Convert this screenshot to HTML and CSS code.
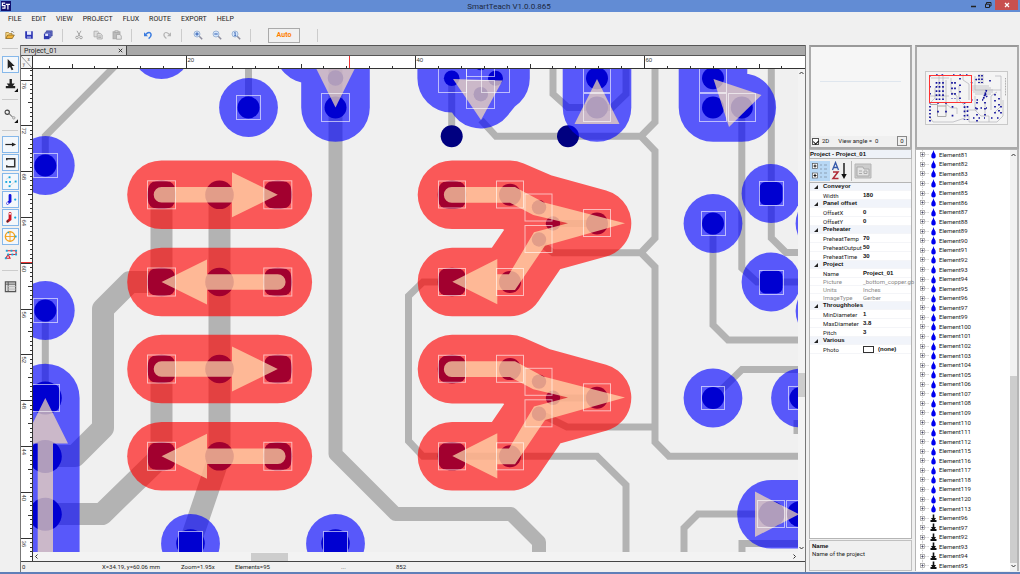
FILE: index.html
```html
<!DOCTYPE html>
<html lang="en">
<head>
<meta charset="utf-8">
<title>SmartTeach V1.0.0.865</title>
<link rel="stylesheet" href="styles.css">
</head>
<body>
<div class="app">
  <header class="titlebar">
    <svg class="logo" viewBox="0 0 10 10" aria-hidden="true"><rect width="10" height="10" fill="#101070"/><path d="M4.2 2.2H1.4V4.6H4V7.2H1.2M4.8 3.4H9M6.9 3.4V8.6" fill="none" stroke="#fff" stroke-width="1.2"/></svg>
    <h1 class="title">SmartTeach V1.0.0.865</h1>
    <div class="winbtns">
      <button class="win" aria-label="Minimize"><svg viewBox="0 0 10 10"><path d="M2 6.5H7" stroke="#222" stroke-width="1.5"/></svg></button>
      <button class="win" aria-label="Restore"><svg viewBox="0 0 10 10"><path d="M3.5 4V2.5H8V6H7M2.5 4.2H6.5V7.5H2.500Z" fill="none" stroke="#222"/></svg></button>
      <button class="win close" aria-label="Close"><svg viewBox="0 0 10 10"><path d="M3 3L7 7M7 3L3 7" stroke="#fff" stroke-width="1.2"/></svg></button>
    </div>
  </header>
  <nav class="menu">
    <button>FILE</button><button>EDIT</button><button>VIEW</button><button>PROJECT</button><button>FLUX</button><button>ROUTE</button><button>EXPORT</button><button>HELP</button>
  </nav>
  <div class="toolbar">
    <button class="tb" aria-label="Open"><svg viewBox="0 0 10 10"><path d="M.8 8.500V2.500H3.500L4.300 3.500H7V5" fill="#f7d98a" stroke="#a87a20" stroke-width=".7"/><path d="M.8 8.500L2.700 5H9.300L7.300 8.500Z" fill="#f2b43c" stroke="#7a5a18" stroke-width=".7"/><path d="M6 1.800Q8 .8 8.800 2.700" fill="none" stroke="#555" stroke-width=".7"/></svg></button>
    <button class="tb" aria-label="Save"><svg viewBox="0 0 10 10"><path d="M1.200 1.200H8.800V8.800H2L1.200 8Z" fill="#2c35b4"/><rect x="3" y="1.200" width="4.200" height="3.600" fill="#e8ecff"/><rect x="3" y="6.200" width="4" height="2.600" fill="#8a92dc"/></svg></button>
    <button class="tb" aria-label="Save all"><svg viewBox="0 0 10 10"><path d="M3.500 .8H9.200V6H3.500Z" fill="#6b74cc" stroke="#2c3590" stroke-width=".6"/><path d="M2.200 2.200H7.800V7.500H2.200Z" fill="#7d86d8" stroke="#2c3590" stroke-width=".6"/><path d="M.9 3.600H6.500V9.200H.9Z" fill="#2f39b0"/><rect x="2.200" y="3.700" width="3" height="2.300" fill="#dfe4ff"/></svg></button>
    <span class="sep"></span>
    <button class="tb" aria-label="Cut"><svg viewBox="0 0 10 10"><g fill="none" stroke="#a6a6a6"><path d="M3 .8L6 6.300M7 .8L4 6.300"/><circle cx="3" cy="7.500" r="1.300"/><circle cx="7" cy="7.500" r="1.300"/></g></svg></button>
    <button class="tb" aria-label="Copy"><svg viewBox="0 0 10 10"><g fill="#ddd" stroke="#aaa" stroke-width=".8"><path d="M1 1.200H4.500L6 2.600V6.800H1Z"/><path d="M4.200 3.500H7.500L9.200 5V9H4.200Z"/><path d="M5.200 6H8M5.200 7.500H8"/></g></svg></button>
    <button class="tb" aria-label="Paste"><svg viewBox="0 0 10 10"><g stroke="#a5a5a5" stroke-width=".8"><rect x="1" y="1.800" width="7" height="7" fill="#bbb"/><rect x="3" y=".8" width="3" height="1.800" fill="#ddd"/><path d="M4.500 4.500H8L9.300 6V9.200H4.500Z" fill="#e6e6e6"/></g></svg></button>
    <span class="sep"></span>
    <button class="tb" aria-label="Undo"><svg viewBox="0 0 10 10"><path d="M2.600 4.400Q6.500 .8 8 4Q8.600 6.500 5.600 8.600" fill="none" stroke="#3a7be0" stroke-width="1.400"/><path d="M1 2.200V6.200H5Z" fill="#3a7be0"/></svg></button>
    <button class="tb" aria-label="Redo"><svg viewBox="0 0 10 10"><path d="M7.400 4.400Q3.500 .8 2 4Q1.400 6.500 4.400 8.600" fill="none" stroke="#b4b4b4" stroke-width="1.200"/><path d="M9 2.200V6.200H5Z" fill="#b4b4b4"/></svg></button>
    <span class="sep"></span>
    <button class="tb" aria-label="Zoom in"><svg viewBox="0 0 10 10"><path d="M6 6L9.200 9.200" stroke="#8e8e9e" stroke-width="1.500"/><circle cx="4" cy="4" r="3" fill="#d5e6fb" stroke="#8fa9cf" stroke-width=".8"/><path d="M2.300 4H5.700M4 2.300V5.700" stroke="#2c5bb0"/></svg></button>
    <button class="tb" aria-label="Zoom out"><svg viewBox="0 0 10 10"><path d="M6 6L9.200 9.200" stroke="#8e8e9e" stroke-width="1.500"/><circle cx="4" cy="4" r="3" fill="#d5e6fb" stroke="#8fa9cf" stroke-width=".8"/><path d="M2.300 4H5.700" stroke="#2c5bb0"/></svg></button>
    <button class="tb" aria-label="Zoom 100%"><svg viewBox="0 0 10 10"><path d="M6 6L9.200 9.200" stroke="#8e8e9e" stroke-width="1.500"/><circle cx="4" cy="4" r="3" fill="#d5e6fb" stroke="#8fa9cf" stroke-width=".8"/><path d="M3.200 3L4.200 2.300V5.700M3.200 5.700H5.200" stroke="#2c5bb0" fill="none" stroke-width=".8"/></svg></button>
    <span class="sep"></span>
    <button class="auto">Auto</button>
    <span class="sep far"></span>
  </div>
  <main class="body">
    <aside class="tools">
      <span class="grip"></span>
      <button class="tool on" aria-label="Select"><svg viewBox="0 0 16 16"><path d="M5 2V12.500L7.500 10.300L9.200 14L11 13.200L9.300 9.600H12.500Z" fill="#222"/></svg></button>
      <button class="tool" aria-label="Nozzle"><svg viewBox="0 0 16 16"><path d="M7 2H9.500V7H12.500L10.500 9.500H13V12H3V9.500H6L4 7H7Z" fill="#222"/><path d="M16 12V16H12Z" fill="#111"/></svg></button>
      <span class="grip"></span>
      <button class="tool" aria-label="Route"><svg viewBox="0 0 16 16"><g fill="none" stroke="#444"><circle cx="4.500" cy="4.500" r="2.300" stroke-width="1.200"/><path d="M6.500 6L10 9.500"/><circle cx="11.500" cy="10.500" r="1.300" stroke="#999"/></g><path d="M16 12V16H12Z" fill="#111"/></svg></button>
      <span class="grip"></span>
      <div class="toolset">
        <button class="tool on" aria-label="Arrow"><svg viewBox="0 0 16 16"><path d="M2.500 8H10" stroke="#222" stroke-width="1.300"/><path d="M9.500 5.800L14 8L9.500 10.200Z" fill="#222"/></svg></button>
        <button class="tool on" aria-label="Bracket"><svg viewBox="0 0 16 16"><path d="M4 5.500V4H12.500V12.500H4V11" fill="none" stroke="#333" stroke-width="1.600"/></svg></button>
        <button class="tool on" aria-label="Points"><svg viewBox="0 0 16 16"><g stroke="#bbb" stroke-width=".5" fill="none"><path d="M3 6L7 3M7 13L13 8"/></g><g fill="#18a8dc"><rect x="6" y="2.500" width="2" height="2"/><rect x="2.500" y="7.500" width="2" height="2"/><rect x="6.500" y="7.500" width="2" height="2"/><rect x="12.500" y="7" width="2" height="2"/><rect x="6" y="12" width="2" height="2"/></g></svg></button>
        <button class="tool on" aria-label="Blue joint"><svg viewBox="0 0 16 16"><path d="M7.500 3.500V10L5 12" fill="none" stroke="#1414dc" stroke-width="3" stroke-linecap="round"/><circle cx="5" cy="12" r="1" fill="#fff"/><circle cx="13" cy="8" r="1.200" fill="#18a8dc"/></svg></button>
        <button class="tool on" aria-label="Red joint"><svg viewBox="0 0 16 16"><path d="M7.500 3.500V10L5 12" fill="none" stroke="#d01420" stroke-width="3" stroke-linecap="round"/><circle cx="7.500" cy="4" r="1" fill="#fff"/><circle cx="5" cy="12" r="1" fill="#333"/><circle cx="13" cy="8" r="1.200" fill="#18a8dc"/></svg></button>
        <button class="tool on" aria-label="Target"><svg viewBox="0 0 16 16"><circle cx="7.500" cy="8" r="5" fill="none" stroke="#f5a21c" stroke-width="1.500"/><path d="M7.500 3V13M2.500 8H12.500" stroke="#f5a21c"/><g fill="#18a8dc"><rect x="5" y="3" width="1.500" height="1.500"/><rect x="12.500" y="7" width="2" height="2"/></g></svg></button>
        <button class="tool" aria-label="Path"><svg viewBox="0 0 16 16"><path d="M4 4H14V8H5.500L7.500 12H3L5.500 8" fill="none" stroke="#e02030" stroke-width="1.200"/><g fill="#18a8dc"><rect x="3" y="3" width="2" height="2"/><rect x="8" y="3" width="2" height="2"/><rect x="13" y="3" width="2" height="2"/><rect x="9" y="7" width="2" height="2"/><rect x="4.500" y="7" width="2" height="2"/><rect x="13" y="7" width="2" height="2"/><rect x="2" y="11" width="2" height="2"/></g></svg></button>
      </div>
      <span class="grip"></span>
      <button class="tool" aria-label="Sheet"><svg viewBox="0 0 16 16"><path d="M2.500 3H13.500V13.500H2.500Z" fill="#ddd" stroke="#555" stroke-width="1.200"/><path d="M2.500 5.500H13.500M5.500 3V13.500" stroke="#555" fill="none"/><path d="M5.500 8H13.500M5.500 10.800H13.500" stroke="#bbb" fill="none"/></svg></button>
    </aside>
    <section class="work">
      <div class="tabs"><div class="tab"><span>Project_01</span><button class="tabx" aria-label="Close tab"><svg viewBox="0 0 8 8"><path d="M2 2L6 6M6 2L2 6" stroke="#222"/></svg></button></div></div>
      <div class="stage">
        <svg class="corner" viewBox="0 0 12 13"><path d="M0 0L12 13" stroke="#777" stroke-width=".8"/><text x="7" y="5" class="rt">x</text><text x="2" y="11" class="rt">y</text></svg>
        <svg class="hruler" id="hruler" aria-hidden="true"></svg>
        <svg class="vruler" id="vruler" aria-hidden="true"></svg>
        <svg class="board" viewBox="33 69 765 483" preserveAspectRatio="xMinYMin slice" role="img" aria-label="Circuit board">
          <defs>
            <g id="round"><circle r="11"/></g>
            <path id="vee" d="M452 194.800H510L539 207.500L597 223.500L539 239.500L510 282H452"/>
            <g id="veepads"><rect x="438.500" y="181.500" width="27" height="27" rx="8"/><circle cx="452" cy="194.800" r="14.300"/><circle cx="510" cy="194.800" r="11"/><circle cx="539" cy="207.300" r="7.200"/><circle cx="553" cy="223.500" r="7.200"/><circle cx="539" cy="239.500" r="7.200"/><circle cx="597" cy="223.500" r="11"/><circle cx="510" cy="282" r="11"/><rect x="438.500" y="268.500" width="27" height="27" rx="8"/><circle cx="452" cy="282" r="14.300"/></g>
            <path id="veearrow" d="M451.700 187H515L543.300 202.300L625 223.300L545 245.700L515 290H497.300V304.300L452.300 281.700L497.300 259V274.300H509L534 232.300L568 223.300L533.300 215L510 202.700H451.700A7.800 7.800 0 0 1 451.700 187Z"/>
            <g id="veebox"><rect x="438.500" y="181" width="27" height="27"/><rect x="496.500" y="181" width="27" height="27"/><rect x="525" y="194" width="27" height="27"/><rect x="525" y="225.500" width="27" height="27"/><rect x="583.500" y="209.500" width="27" height="27"/><rect x="438.500" y="268.500" width="27" height="27"/><rect x="496.500" y="268.500" width="27" height="27"/></g>
            <g id="rowpads"><rect x="148" y="-13.500" width="27" height="27" rx="8"/><circle cx="161.500" r="14.300"/><circle cx="219.500" r="14.300"/><rect x="264.300" y="-13.500" width="27" height="27" rx="8"/><circle cx="277.800" r="14.300"/></g>
            <g id="rowbox"><rect x="147.500" y="-14" width="28" height="28"/><rect x="263.800" y="-14" width="28" height="28"/></g>
            <path id="right" d="M161.500 -7.800H232V-22.500L277.800 0L232 22.500V7.800H161.500A7.800 7.800 0 0 1 161.500 -7.800Z"/>
            <path id="left" d="M277.800 -7.800H207V-22.500L161.500 0L207 22.500V7.800H277.800A7.800 7.800 0 0 0 277.800 -7.800Z"/>
          </defs>
          <rect x="33" y="69" width="765" height="483" fill="#f0f0f0"/>
          <g class="trace wide">
            <path d="M161.500 195V282M161.500 369V456M219.500 195V456L190 543"/>
            <path d="M161.500 282H130L103 309V428L75 456H45"/>
            <path d="M161.500 456L102 514H45"/>
          </g>
          <path class="trace mid" d="M335.500 60V454L395.500 514H511L539 542V560"/>
          <g class="trace thin">
            <path d="M45.300 165V136L115 66M45.300 310V398M248.500 60V107M451.700 78V136"/>
            <path d="M481 120L496 136.300H641L655 122V60M641 136.300L655 151V238L641 252.700H553L543 245M641 252.700L655 267V442L669 456.300H800M655 427H567L545 416"/>
            <path d="M553 60V94L568 107.500H612L626 94V60"/>
            <path d="M452 282H423L408.500 296V441L423 456.300H597L626 485V560"/>
            <path d="M553 223.500H597M553 398H597"/>
            <path d="M741.800 107V268L757 282H800M771.300 60V238L786 252.500H800M713 223V325L728 340H800"/>
            <path d="M713 398L742 369.500H800M797 420V434M771 514H698L684 528V560M742 560V543.500H800"/>
          </g>
          <g class="pad">
            <use href="#rowpads" y="194.800"/><use href="#rowpads" y="282"/><use href="#rowpads" y="369"/><use href="#rowpads" y="456.300"/>
            <use href="#veepads"/><use href="#veepads" y="174.300"/>
            <use href="#round" x="45.300" y="165.500"/><use href="#round" x="45.300" y="310.500"/><use href="#round" x="248.500" y="107.500"/>
            <rect x="31" y="384.500" width="28" height="27" rx="5"/><circle cx="45.300" cy="398" r="16.500"/><circle cx="45.300" cy="456.500" r="16.500"/><circle cx="45.300" cy="514.300" r="16.500"/>
            <use href="#round" x="335.500" y="107.500"/><circle cx="335.500" cy="78" r="7.800"/>
            <circle cx="451.700" cy="78.300" r="7.800"/><circle cx="495.500" cy="78.300" r="7.500"/><circle cx="480.800" cy="94.200" r="7.200"/><circle cx="480.800" cy="63" r="7.200"/>
            <use href="#round" x="451.700" y="136.300"/><use href="#round" x="568" y="136.300"/><use href="#round" x="597" y="78.300"/><use href="#round" x="597" y="107.500"/>
            <use href="#round" x="713" y="78.300"/><use href="#round" x="713" y="107.500"/><use href="#round" x="741.800" y="107.500"/>
            <use href="#round" x="713" y="223.500"/><use href="#round" x="713" y="398"/><use href="#round" x="800.500" y="398"/>
            <rect x="759.500" y="182" width="23" height="23" rx="6"/><rect x="759.500" y="270.500" width="23" height="23" rx="6"/>
            <circle cx="771.500" cy="514" r="13"/><circle cx="800" cy="514" r="13"/>
            <rect x="178.500" y="531.500" width="24" height="24"/><circle cx="190.500" cy="543.500" r="14.300"/><rect x="323.500" y="531.500" width="24" height="24"/><circle cx="335.500" cy="543.500" r="14.300"/>
          </g>
          <g class="zone red">
            <path d="M161.500 194.800H277.800"/><path d="M161.500 282H277.800"/><path d="M161.500 369H277.800"/><path d="M161.500 456.300H277.800"/>
            <use href="#vee"/><use href="#vee" y="174.300"/>
          </g>
          <g class="zone blue">
            <path d="M45.300 398V600"/><path d="M309 49H335.500V107.500"/>
            <path d="M451.700 50V78.300H495.500V50M480.800 94.200L495.500 76"/>
            <path d="M597 50V107.500"/><path d="M713 40V107.500H741.800"/><path d="M771.500 514.300H840"/>
          </g>
          <g class="halo">
            <circle cx="45.300" cy="165.500" r="29.400"/><circle cx="45.300" cy="310.500" r="29.400"/><circle cx="161.500" cy="49.600" r="29.400"/><circle cx="248.500" cy="107.500" r="29.400"/>
            <circle cx="190.500" cy="543.500" r="29.400"/><circle cx="335.500" cy="543.500" r="29.400"/><circle cx="771" cy="193.500" r="29.400"/><circle cx="771" cy="282" r="29.400"/>
            <circle cx="713" cy="223.500" r="29.400"/><circle cx="713" cy="398" r="29.400"/><circle cx="800.500" cy="398" r="29.400"/><circle cx="825" cy="223.500" r="29.400"/><circle cx="825" cy="311" r="29.400"/>
          </g>
          <g class="arrow">
            <use href="#right" y="194.800"/><use href="#left" y="282"/><use href="#right" y="369"/><use href="#left" y="456.300"/>
            <use href="#veearrow"/><use href="#veearrow" y="174.300"/>
            <path d="M45.300 398L68 443.500H53V560H37.700V443.500H22.600Z"/>
            <path d="M335.500 107.500L313 62H358Z"/><path d="M453 79L502.500 80.500L481 120Z"/><path d="M597 79L619.500 124H574.500Z"/>
            <path d="M713.500 79L761.500 95L729 127Z"/><path d="M755 491.500L799 514.300L755 537Z"/>
          </g>
          <g class="box">
            <use href="#rowbox" y="194.800"/><use href="#rowbox" y="282"/><use href="#rowbox" y="369"/><use href="#rowbox" y="456.300"/>
            <use href="#veebox"/><use href="#veebox" y="174.300"/>
            <rect x="33.500" y="153.500" width="24" height="24"/><rect x="33.500" y="298.500" width="24" height="24"/><rect x="31.500" y="384.500" width="28" height="27"/>
            <rect x="236.500" y="95.500" width="24" height="24"/><rect x="321.500" y="93.500" width="28" height="28"/>
            <rect x="438.500" y="64.500" width="28" height="28"/><rect x="481.500" y="64.500" width="28" height="28"/><rect x="466.500" y="80.500" width="28" height="28"/><rect x="466.500" y="48.500" width="28" height="28"/>
            <rect x="583.500" y="64.500" width="27" height="28"/><rect x="583.500" y="93.500" width="27" height="28"/>
            <rect x="699.500" y="64.500" width="27" height="28"/><rect x="699.500" y="93.500" width="27" height="28"/><rect x="728.500" y="93.500" width="27" height="28"/>
            <rect x="701.500" y="211.500" width="24" height="24"/><rect x="759.500" y="181.500" width="24" height="24"/><rect x="759.500" y="270.500" width="24" height="24"/>
            <rect x="701.500" y="386.500" width="23" height="23"/><rect x="788.500" y="386.500" width="24" height="23"/>
            <rect x="757.500" y="500.500" width="27" height="27"/><rect x="786.500" y="500.500" width="27" height="27"/>
            <rect x="178.500" y="531.500" width="24" height="24"/><rect x="323.500" y="531.500" width="24" height="24"/>
          </g>
        </svg>
        <div class="vscroll"><svg viewBox="0 0 7 7"><path d="M1.500 5L3.500 3L5.500 5" class="chev"/></svg><span class="vthumb"></span><svg class="end" viewBox="0 0 7 7"><path d="M1.500 2L3.500 4L5.500 2" class="chev"/></svg></div>
        <div class="hscroll"><svg viewBox="0 0 7 7"><path d="M4.500 1.500L2.500 3.500L4.500 5.500" class="chev"/></svg><span class="hthumb"></span><svg class="end" viewBox="0 0 7 7"><path d="M2.500 1.500L4.500 3.500L2.500 5.500" class="chev"/></svg></div>
      </div>
      <footer class="status"><span class="s0">0</span><span class="s1">X=34.19, y=60.06 mm</span><span class="s2">Zoom=1.95x</span><span class="s3">Elements=95</span><span class="s4">...</span><span>852</span></footer>
    </section>
    <section class="side props">
      <div class="view">
        <div class="horizon"></div>
        <div class="viewbar"><label><input type="checkbox" checked>2D</label><span class="angle">View angle =&nbsp;&nbsp;0</span><button class="zero">0</button></div>
      </div>
      <h2 class="ptitle">Project - Project_01</h2>
      <div class="ptools">
        <button class="pt on" aria-label="Categorized"><svg viewBox="0 0 20 20"><g fill="#fff" stroke="#555" stroke-width=".7"><rect x="2.500" y="2.500" width="5" height="5"/><rect x="2.500" y="12" width="5" height="5"/></g><path d="M3.500 5H6.500M5 3.500V6.500M3.500 14.500H6.500M5 13V16" stroke="#111"/><path d="M10 4H12M10 8H12M10 12H12M10 16H12M14 4H17M14 8H17M14 12H17M14 16H17" stroke="#8ba0b5" stroke-width="1.200"/></svg></button>
        <button class="pt" aria-label="Alphabetical"><svg viewBox="0 0 20 20"><path d="M2.500 9L5.500 1.500L8.500 9M3.500 6.500H7.500" fill="none" stroke="#3558a8" stroke-width="1.300"/><path d="M3 11H8L3 17.500H8.500" fill="none" stroke="#b02a35" stroke-width="1.500"/><path d="M14 2V14" stroke="#111" stroke-width="1.400"/><path d="M11.300 13H16.700L14 18Z" fill="#111"/></svg></button>
        <span class="psep"></span>
        <button class="pt" aria-label="Property pages"><svg viewBox="0 0 20 20"><path d="M2 3H18V17H2Z" fill="#ccc" stroke="#b5b5b5"/><path d="M4 6H10L11 8H16V15H4Z" fill="#e2e2e2" stroke="#aaa"/><path d="M6 10H9M6 12.500H9M11 10H14V12.500H11Z" fill="none" stroke="#aaa"/></svg></button>
      </div>
      <div class="gridwrap">
        <table class="grid">
          <colgroup><col class="c1"><col class="c2"><col></colgroup>
          <tbody>
            <tr class="cat"><td><i></i></td><th colspan="2">Conveyor</th></tr>
            <tr><td></td><td>Width</td><td><b>180</b></td></tr>
            <tr class="cat"><td><i></i></td><th colspan="2">Panel offset</th></tr>
            <tr><td></td><td>OffsetX</td><td><b>0</b></td></tr>
            <tr><td></td><td>OffsetY</td><td><b>0</b></td></tr>
            <tr class="cat"><td><i></i></td><th colspan="2">Preheater</th></tr>
            <tr><td></td><td>PreheatTemp</td><td><b>70</b></td></tr>
            <tr><td></td><td>PreheatOutput</td><td><b>50</b></td></tr>
            <tr><td></td><td>PreheatTime</td><td><b>30</b></td></tr>
            <tr class="cat"><td><i></i></td><th colspan="2">Project</th></tr>
            <tr><td></td><td>Name</td><td><b>Project_01</b></td></tr>
            <tr class="off"><td></td><td>Picture</td><td>_bottom_copper.gb</td></tr>
            <tr class="off"><td></td><td>Units</td><td>Inches</td></tr>
            <tr class="off"><td></td><td>ImageType</td><td>Gerber</td></tr>
            <tr class="cat"><td><i></i></td><th colspan="2">Throughholes</th></tr>
            <tr><td></td><td>MinDiameter</td><td><b>1</b></td></tr>
            <tr><td></td><td>MaxDiameter</td><td><b>3.8</b></td></tr>
            <tr><td></td><td>Pitch</td><td><b>3</b></td></tr>
            <tr class="cat"><td><i></i></td><th colspan="2">Various</th></tr>
            <tr><td></td><td>Photo</td><td><span class="swatch"></span><b>(none)</b></td></tr>
          </tbody>
        </table>
      </div>
      <div class="desc"><b>Name</b><p>Name of the project</p></div>
    </section>
    <section class="side elems">
      <div class="map">
        <svg viewBox="0 0 95 64" role="img" aria-label="Board overview">
          <rect x="6.500" y="5.500" width="82" height="53" fill="#f4f4f4" stroke="#c9c9c9"/>
          <g fill="none" stroke="#b2b2b8" stroke-width=".7">
            <path d="M12 36L16 32V22L20 18M27 14V38L32 42H38V48M10 50L14 56H34L46 52V40L40 34V20M44 8V14L50 18V34M56 10V24H82V10H76M52 20H70M52 22H72M52 24H74M54 26H74M56 28H72M60 8V18M62 8V18M64 8V18M56 30V44L62 50H70V56M72 44V30L78 26M82 24V40L76 46M10 30H30M32 12V26L38 30V36M48 44H58M50 50V56H78L84 50V34M66 36V50M12 12H30M20 10V30M24 10V34"/>
          </g>
          <path d="M11 38.500H18.500V50.500H27V36.500M19 40H27" fill="none" stroke="#aaa"/>
          <path d="M86.500 12V30" stroke="#aaa" stroke-dasharray="1 .6"/>
          <g fill="none" stroke="#10109a" stroke-width="1.700">
            <path d="M11 9V10.500M11 20V22M11 27V30M11 36V38M11 40V56" stroke-dasharray="1.500 2"/>
            <path d="M17.500 16V34M20.500 16V34M24 16V34" stroke-dasharray="1.700 2.400"/>
            <path d="M17 9H28M33 16V33M36 16V33" stroke-dasharray="1.700 3.800"/>
            <path d="M19 36V52M27 36V52M33.500 40V56" stroke-dasharray="1.800 7"/>
            <path d="M34 9H52M41 12V33" stroke-dasharray="1.500 5"/>
            <path d="M45.500 36V54M48.500 40V54" stroke-dasharray="1.700 2.600"/>
            <path d="M60 9V17M63 9V17M71 14V16" stroke-dasharray="1.500 2"/>
            <path d="M52 17L58 13M52 34H64M56 42H68M54 52H66" stroke-dasharray="1.500 4"/>
            <path d="M67.500 24L64 34M66 28L68 31" stroke-dasharray="1.700 .8"/>
            <path d="M66 36V54M76 28V52M80 32V46M72 52H84M58 36V56M82 40V52" stroke-dasharray="1.500 4.500"/>
          </g>
          <rect x="10.500" y="9.500" width="42" height="27" fill="none" stroke="#f33"/>
        </svg>
      </div>
      <div class="treewrap">
        <ul class="tree" id="tree"></ul>
        <div class="tscroll"><svg viewBox="0 0 7 7"><path d="M1.500 5L3.500 3L5.500 5" class="chev"/></svg><span class="tthumb"></span><svg viewBox="0 0 7 7"><path d="M1.500 2L3.500 4L5.500 2" class="chev"/></svg></div>
      </div>
    </section>
  </main>
</div>
<script src="main.js"></script>
</body>
</html>
```
FILE: styles.css
```css
* { box-sizing: border-box; }
body { margin: 0; background: #f0f0f0; color: #222; font: 6px/8px Roboto, "Liberation Sans", sans-serif; }
button { margin: 0; padding: 0; border: 0; background: none; color: inherit; font: inherit; }
svg { display: block; }
h1, h2, p, ul { margin: 0; padding: 0; font-weight: normal; }
b, th, h2 { font-family: "Liberation Sans", Arial, sans-serif; font-weight: bold; color: #111; }

.app { display: flex; flex-direction: column; height: 100vh; border-bottom: 2px solid #5f7fb8; }
.titlebar { display: flex; align-items: flex-start; height: 12px; background: #628cd4; }
.logo { width: 10px; height: 10px; flex: none; margin: 1px; }
.title { flex: 1; padding-left: 39px; font-size: 8px; line-height: 13px; text-align: center; color: #1c2840; }
.winbtns { display: flex; padding-right: 2px; }
.win { display: flex; justify-content: center; width: 14px; height: 10px; }
.win svg { width: 10px; height: 10px; }
.win.close { width: 23px; background: #c8504f; }

.menu { display: flex; gap: 10px; padding-left: 8px; height: 13px; }
.menu button { font-size: 7px; line-height: 15px; height: 15px; }
.toolbar { display: flex; align-items: center; height: 20px; }
.tb { display: flex; justify-content: center; width: 19px; }
.tb svg { width: 10px; height: 10px; }
.sep { width: 1px; height: 13px; margin: 0 6px 0 5px; background: #ccc; }
.auto { width: 32px; height: 15px; margin-left: 11px; border: 1px solid #aaa; color: #ff8000; font-size: 7px; font-weight: bold; }
.sep.far { margin-left: 17px; }

.body { display: flex; flex: 1; min-height: 0; }
.tools { display: flex; flex-direction: column; align-items: center; width: 20px; padding-top: 3px; }
.grip { flex: none; width: 16px; height: 1px; background: #ccc; }
.tool { flex: none; width: 17px; height: 17px; border: 1px solid transparent; }
.tool svg { width: 15px; height: 15px; }
.tool.on { border-color: #86b8ea; background: #f3f7fb; }
.grip + .tool { margin-top: 7px; }
.tool + .tool { margin-top: 3px; }
.tool + .grip { margin-top: 6px; }
.toolset { display: flex; flex-direction: column; justify-content: space-between; flex: none; height: 127px; margin: 5px 0 7px; }
.toolset .tool { margin-top: 0; }

.work { display: flex; flex-direction: column; flex: 1; min-width: 0; border: solid #777; border-width: 0 1px; }
.tabs { display: flex; height: 11px; background: #a8a8a8; border: solid #555; border-width: 1px 0; }
.tab { display: flex; justify-content: space-between; align-items: center; width: 106px; padding: 0 2px 0 3px; border-right: 1px solid #444; background: #d6d6d6; font-size: 7px; }
.tabx svg { width: 7px; height: 7px; }
.stage { display: grid; flex: 1; min-height: 0; grid-template: 13px 1fr 9px / 12px 1fr 7px; }
.stage > * { min-width: 0; min-height: 0; }
.corner { width: 12px; height: 13px; border: solid #333; border-width: 0 1px 1px 0; background: #f4f4f4; }
.rt { font-size: 5px; fill: #555; }
.hruler { grid-column: 2 / 4; width: 100%; height: 13px; background: #fff; border-bottom: 1px solid #333; }
.vruler { grid-row: 2 / 4; width: 12px; height: 100%; background: #fff; border-right: 1px solid #333; }
.tick { stroke: #333; }
.cursor { stroke: #e33; }
.rlabel { font: 6px "Liberation Sans", Arial, sans-serif; fill: #333; }
.board { width: 100%; height: 100%; }
.trace { fill: none; stroke: #b3b3b3; stroke-linejoin: round; }
.wide { stroke-width: 22; }
.mid { stroke-width: 14; }
.thin { stroke-width: 7; stroke-linejoin: miter; }
.pad { fill: #000080; }
.zone { fill: none; stroke-width: 68.6; stroke-linecap: round; stroke-linejoin: round; stroke-opacity: .635; }
.red { stroke: #f00; }
.blue { stroke: #00f; }
.halo { fill: #00f; fill-opacity: .635; }
.arrow { fill: #ffe3b2; fill-opacity: .69; }
.box { fill: none; stroke: #fff; stroke-opacity: .6; }
.chev { fill: none; stroke: #333; stroke-width: 1; }
.vscroll, .hscroll { display: flex; background: #f3f3f3; }
.vscroll { flex-direction: column; }
.vscroll svg, .hscroll svg, .tscroll svg { flex: none; width: 7px; height: 7px; }
.hscroll { grid-column: 2 / 4; align-items: center; }
.hscroll .end { margin-left: auto; margin-right: 7px; }
.vscroll .end { margin-top: auto; }
.vthumb { height: 24px; margin-top: 297px; background: #cdcdcd; }
.hthumb { width: 37px; height: 8px; margin-left: 211px; background: #cdcdcd; }
.status { display: flex; height: 11px; padding-left: 1px; border-top: 1px solid #444; line-height: 10px; }
.s0 { width: 80px; }
.s1 { width: 79px; }
.s2 { width: 54px; }
.s3 { width: 106px; }
.s4 { width: 55px; }

.side { display: flex; flex-direction: column; flex: none; width: 103px; margin-left: 3px; padding-bottom: 1px; }
.elems { width: 104px; margin-right: 1px; }
.view, .map { flex: none; height: 104px; border: 2px solid #ababab; border-top-color: #999; }
.view { display: flex; flex-direction: column; background: #f6f6f6; }
.horizon { height: 35px; margin: 0 9px; border-bottom: 1px solid #dfe6ee; }
.viewbar { display: flex; align-items: center; margin-top: auto; padding: 0 3px 1px 1px; background: #f0f0f0; }
.viewbar label { display: flex; align-items: center; gap: 3px; }
.viewbar input { display: flex; justify-content: center; appearance: none; width: 7px; height: 7px; margin: 0; border: 1px solid #555; background: #fff; }
.viewbar input:checked::before { content: ""; width: 3px; height: 4px; border: solid #111; border-width: 0 1px 1px 0; transform: rotate(45deg); }
.angle { margin-left: 9px; }
.zero { width: 10px; height: 10px; margin-left: auto; border: 1px solid #888; line-height: 8px; }
.ptitle { flex: none; height: 10px; border: 1px solid #b5b5b5; background: #eef2f8; font-size: 6px; line-height: 8px; }
.ptools { display: flex; align-items: center; flex: none; height: 23px; padding: 1px 0; border: solid #c5c5c5; border-width: 0 1px; }
.pt { width: 20px; height: 20px; }
.pt.on { background: #b8d8f5; }
.pt svg { width: 20px; height: 20px; }
.psep { width: 1px; height: 20px; margin: 0 1px; background: #bbb; }
.gridwrap { flex: 1; min-height: 0; border: 1px solid #b5b5b5; background: #fff; }
.grid { width: 100%; height: 170px; border-collapse: collapse; table-layout: fixed; line-height: 7px; }
.c1 { width: 13px; }
.c2 { width: 40px; }
.grid td, .grid th { padding: 0; border-bottom: 1px solid #f4f5f8; white-space: nowrap; text-align: left; }
.cat { background: #f1f4fa; }
.grid i { display: block; margin-left: 4px; width: 0; height: 0; border: 2px solid #222; border-top-color: transparent; border-left-color: transparent; }
.off { color: #888; }
.swatch { display: inline-block; width: 11px; height: 7px; margin-right: 4px; border: 1px solid #333; vertical-align: middle; }
.desc { flex: none; height: 31px; margin-top: 1px; padding: 1px 2px; border: 1px solid #c0c0c0; }
.map { padding: 19px 2px 17px; }
.map svg { width: 95px; height: 64px; }
.treewrap { display: flex; flex: 1; min-height: 0; border: solid #b5b5b5; border-width: 1px 2px 0 1px; background: #fff; }
.tree { display: flex; flex-direction: column; flex: 1; list-style: none; }
.tree li { display: flex; align-items: center; flex: 1; min-height: 0; padding-left: 4px; }
.tree svg { width: 17px; height: 9px; margin-right: 2px; }
.tscroll { display: flex; flex-direction: column; width: 7px; padding: 1px 0; background: #f2f2f2; }
.tthumb { height: 187px; margin-top: auto; background: #cdcdcd; }
```
FILE: main.js
```js
const tree = document.getElementById('tree');
const drops = [];
for (let n = 81; n <= 120; n++) {
  if (n !== 98 && n !== 113 && n !== 114) drops.push(n);
}
drops.push(113);
const nozzles = [96, 97, 92, 93, 94, 95];
const drop = '<path d="M13.500 0Q13.700 2 15.500 4.500Q16.500 8.500 13.500 8.500Q10.500 8.500 11.500 4.500Q13.300 2 13.500 0Z" fill="#0000f0"/>';
const nozzle = '<path d="M12.700 .5H14.300V4H16L14.800 6H16.500V8H10.500V6H12.200L11 4H12.700Z" fill="#111"/>';
const row = (n, icon) => `<li><svg viewBox="0 0 17 9"><path d="M2.500 0V9M5 4.500H9" stroke="#bbb" stroke-width=".7" stroke-dasharray="1 .6"/><rect x=".5" y="2.500" width="4" height="4" fill="#fff" stroke="#999" stroke-width=".7"/><path d="M1.300 4.500H3.700M2.500 3.300V5.700" stroke="#335" stroke-width=".7"/>${icon}</svg>Element${n}</li>`;
tree.innerHTML = drops.map(n => row(n, drop)).join('') + nozzles.map(n => row(n, nozzle)).join('');

const PX = 11.45;
const hruler = document.getElementById('hruler');
const vruler = document.getElementById('vruler');

function drawRulers() {
  const width = hruler.getBoundingClientRect().width;
  const height = vruler.getBoundingClientRect().height;
  let h = '';
  for (let mm = 8; ; mm += 2) {
    const x = Math.round((mm - 20) * PX + 153) + .5;
    if (x > width - 1) break;
    const len = mm % 20 === 0 ? 12 : mm % 10 === 0 ? 4 : 2;
    h += `<path class="tick" d="M${x} ${12 - len}V12"/>`;
    if (mm % 20 === 0) h += `<text class="rlabel" x="${x + 1}" y="6">${mm}</text>`;
  }
  hruler.innerHTML = h + '<path class="cursor" d="M316.500 0V12"/>';

  let v = '';
  for (let i = 0; ; i++) {
    const y = Math.round(10.500 + (i - 2) * PX * .4) + .5;
    if (y > height - 1) break;
    const major = (i - 2) % 10 === 0;
    const half = (i - 2) % 5 === 0;
    v += `<path class="tick" d="M${major ? 0 : half ? 7 : 9} ${y}H11"/>`;
    if (major) v += `<text class="rlabel" transform="translate(1 ${y + 2}) rotate(90)">${76 - (i - 2) / 10 * 4}</text>`;
  }
  vruler.innerHTML = v + '<path class="cursor" d="M0 193.500H11"/>';
}
drawRulers();
window.addEventListener('resize', drawRulers);
```
